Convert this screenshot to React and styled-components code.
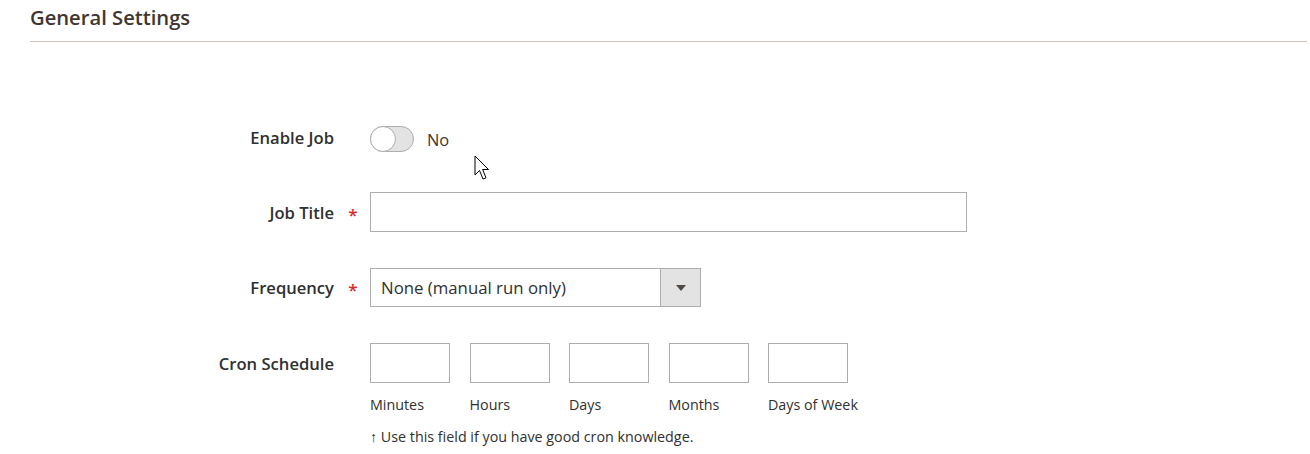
import React from "react";
import styled, { createGlobalStyle } from "styled-components";

const Global = createGlobalStyle`
  html, body { margin: 0; padding: 0; background: #fff; }
  body { font-family: "Open Sans", "Noto Sans", sans-serif; color: #303030; }
  * { box-sizing: border-box; }
`;

const Page = styled.div`
  position: relative;
  width: 1310px;
  height: 454px;
  padding: 0 3px 0 30px;
  overflow: hidden;
`;

const TitleBar = styled.div`
  height: 42px;
  border-bottom: 1px solid #cdc6b8;
  padding-top: 3px;
`;

const Title = styled.h2`
  margin: 0;
  font-size: 20.2px;
  font-weight: 600;
  line-height: 28px;
  color: #41362f;
`;

const Form = styled.div`
  padding-top: 77px;
  display: flex;
  flex-direction: column;
`;

const Row = styled.div`
  display: flex;
  align-items: flex-start;
  margin-top: ${(p) => p.$gap || 0}px;
`;

const LabelCell = styled.div`
  width: 340px;
  height: ${(p) => p.$h || 40}px;
  display: flex;
  align-items: center;
  justify-content: flex-end;
`;

const Label = styled.span`
  font-size: 16.6px;
  font-weight: 600;
  color: #303030;
  margin-top: ${(p) => p.$mt || 0}px;
`;

const Req = styled.span`
  width: 36px;
  text-align: center;
  padding-left: 2px;
  color: #e22626;
  font-size: 17px;
  font-weight: 600;
  line-height: 1;
  padding-top: 4px;
`;

const Control = styled.div`
  display: flex;
  flex-direction: column;
`;

const ToggleWrap = styled.div`
  height: 40px;
  display: flex;
  align-items: center;
  gap: 13px;
`;

const Switch = styled.span`
  position: relative;
  width: 44px;
  height: 26px;
  border: 1px solid #adadad;
  border-radius: 13px;
  background: #e3e3e3;
`;

const Knob = styled.span`
  position: absolute;
  left: -1px;
  top: -1px;
  width: 26px;
  height: 26px;
  border-radius: 50%;
  background: #fff;
  border: 1px solid #adadad;
`;

const ToggleText = styled.span`
  font-size: 16.4px;
  color: #41362f;
  padding-top: 0;
`;

const TextInput = styled.div`
  width: ${(p) => p.$w}px;
  height: ${(p) => p.$h || 40}px;
  border: 1px solid #adadad;
  background: #fff;
`;

const Select = styled.div`
  width: 331px;
  height: 39px;
  border: 1px solid #adadad;
  display: flex;
  align-items: stretch;
`;

const SelectText = styled.span`
  flex: 1;
  display: flex;
  align-items: center;
  padding-left: 10px;
  font-size: 16.8px;
  color: #303030;
`;

const SelectBtn = styled.span`
  width: 40px;
  background: #e3e3e3;
  border-left: 1px solid #adadad;
  display: flex;
  align-items: center;
  justify-content: center;
  &::after {
    content: "";
    width: 0;
    height: 0;
    border-left: 5px solid transparent;
    border-right: 5px solid transparent;
    border-top: 6px solid #514943;
  }
`;

const CronGrid = styled.div`
  display: flex;
`;

const CronCol = styled.div`
  width: 99.5px;
  display: flex;
  flex-direction: column;
`;

const CronLabel = styled.span`
  margin-top: 12px;
  font-size: 14.3px;
  line-height: 20px;
  color: #303030;
`;

const Note = styled.div`
  margin-top: 12px;
  font-size: 14.3px;
  line-height: 20px;
  color: #303030;
`;

const Cursor = styled.svg`
  position: absolute;
  left: 474px;
  top: 155px;
`;

const cron = ["Minutes", "Hours", "Days", "Months", "Days of Week"];

export default function App() {
  return (
    <>
      <Global />
      <Page>
        <TitleBar>
          <Title>General Settings</Title>
        </TitleBar>
        <Form>
          <Row>
            <LabelCell>
              <Label $mt={-3}>Enable Job</Label>
              <Req />
            </LabelCell>
            <Control>
              <ToggleWrap>
                <Switch>
                  <Knob />
                </Switch>
                <ToggleText>No</ToggleText>
              </ToggleWrap>
            </Control>
          </Row>
          <Row $gap={33}>
            <LabelCell>
              <Label>Job Title</Label>
              <Req>*</Req>
            </LabelCell>
            <Control>
              <TextInput $w={597} />
            </Control>
          </Row>
          <Row $gap={36}>
            <LabelCell $h={39}>
              <Label>Frequency</Label>
              <Req>*</Req>
            </LabelCell>
            <Control>
              <Select>
                <SelectText>None (manual run only)</SelectText>
                <SelectBtn />
              </Select>
            </Control>
          </Row>
          <Row $gap={36}>
            <LabelCell>
              <Label>Cron Schedule</Label>
              <Req />
            </LabelCell>
            <Control>
              <CronGrid>
                {cron.map((c) => (
                  <CronCol key={c}>
                    <TextInput $w={80} />
                    <CronLabel>{c}</CronLabel>
                  </CronCol>
                ))}
              </CronGrid>
              <Note>↑ Use this field if you have good cron knowledge.</Note>
            </Control>
          </Row>
        </Form>
        <Cursor width="20" height="28" viewBox="0 0 20 28">
          <path
            d="M1 1 L1 20 L5.5 15.5 L9 24 L12 22.8 L8.6 14.5 L14.5 14.5 Z"
            fill="#fff"
            stroke="#000"
            strokeWidth="1"
            strokeLinejoin="miter"
          />
        </Cursor>
      </Page>
    </>
  );
}
